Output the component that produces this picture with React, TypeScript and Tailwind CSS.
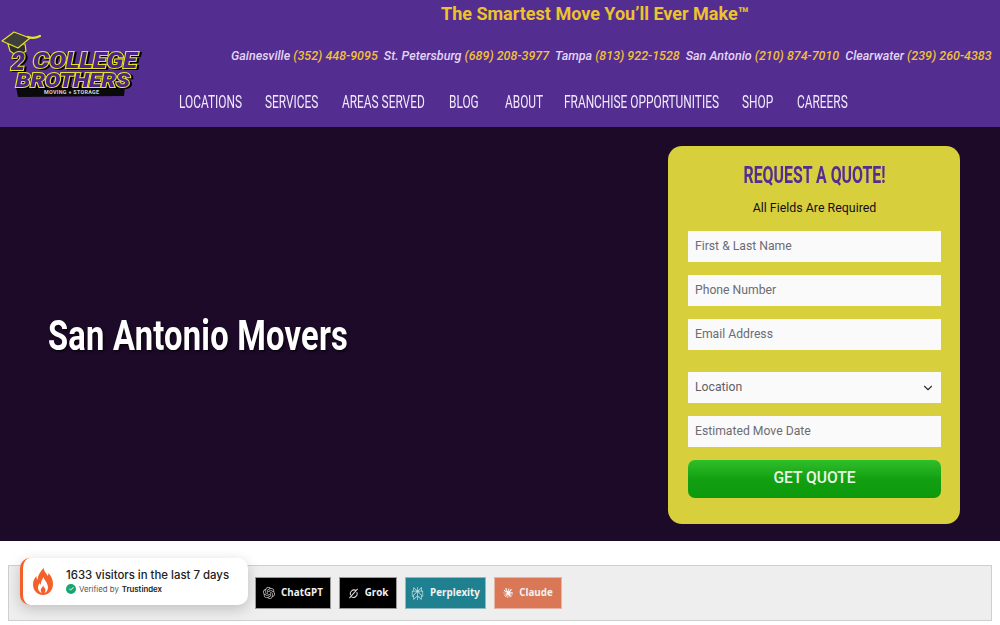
import React from 'react';
import { ChevronDown } from 'lucide-react';
import { SiOpenai, SiPerplexity, SiClaude } from 'react-icons/si';

const offices = [
  { city: 'Gainesville', phone: '(352) 448-9095' },
  { city: 'St. Petersburg', phone: '(689) 208-3977' },
  { city: 'Tampa', phone: '(813) 922-1528' },
  { city: 'San Antonio', phone: '(210) 874-7010' },
  { city: 'Clearwater', phone: '(239) 260-4383' },
];

const navItems = [
  { label: 'LOCATIONS', w: 'w-[62px]' },
  { label: 'SERVICES', w: 'w-[53px]' },
  { label: 'AREAS SERVED', w: 'w-[83px]' },
  { label: 'BLOG', w: 'w-[32px]' },
  { label: 'ABOUT', w: 'w-[35px]' },
  { label: 'FRANCHISE OPPORTUNITIES', w: 'w-[154px]' },
  { label: 'SHOP', w: 'w-[31px]' },
  { label: 'CAREERS', w: 'w-[52px]' },
];

function Logo() {
  return (
    <svg width="146" height="100" viewBox="0 0 146 100" className="shrink-0">
      {/* band under the lettering */}
      <path d="M16 87 L125 87 L124 96 L18 97 Z" fill="#0a0a0a" />
      {/* grad cap */}
      <path d="M8 44 L25 44 L26 51 L18 57 L10 51 Z" fill="#2e2e2a" stroke="#e6e22e" strokeWidth="1.2" />
      <path d="M2 41 L14 32 L30 38 L18 48 Z" fill="#3f3f3a" stroke="#e6e22e" strokeWidth="1.2" strokeLinejoin="round" />
      <path d="M28 37 Q34 39 40 36" fill="none" stroke="#e6e22e" strokeWidth="2.2" strokeLinecap="round" />
      <text x="44" y="94" fill="#d8d8d8" fontSize="5.4" fontWeight="700" fontFamily="Roboto, sans-serif" letterSpacing=".3">MOVING + STORAGE</text>
      <g className="[filter:drop-shadow(2px_1px_0_#000)]" fontFamily="Roboto, sans-serif" fontWeight="900" fontStyle="italic" fill="#4a2488" stroke="#e6e22e" strokeWidth="2" paintOrder="stroke">
        <text x="11" y="70" fontSize="25">2</text>
        <text x="33" y="68" fontSize="22" textLength="104" lengthAdjust="spacingAndGlyphs">COLLEGE</text>
        <text x="16" y="87" fontSize="20" textLength="114" lengthAdjust="spacingAndGlyphs">BROTHERS</text>
      </g>
    </svg>
  );
}

function Flame() {
  return (
    <svg width="20" height="27" viewBox="0 0 20 27" className="shrink-0">
      <path d="M10.500 0c.6 3.600 3 5.600 4.300 8 .5-.8.7-1.800.6-2.900C18 7.700 20 11.500 20 16c0 6.500-4.500 11-10 11S0 22.500 0 16.500c0-3.500 1.500-6.200 3.400-8.500-.1 1.500.3 2.800 1.100 3.700C4.700 7.200 7.500 3.500 10.500 0z" fill="#f4602a" />
      <path d="M10.500 9c.5 3 4.500 5.500 4.500 10.500 0 2.600-1.500 4.600-3.600 5.500 1-1.200 1.400-2.600.9-4-.5-1.200-1.500-1.800-2-3.300-.7 1.500-2.300 2.300-2.500 4-.1 1.300.3 2.400 1 3.300-2.300-.7-3.800-2.800-3.800-5.300 0-2 .9-3.500 1.900-4.700.1.800.4 1.400.9 1.800.2-3.200 1.400-5.400 2.700-7.800z" fill="#fff" />
    </svg>
  );
}

function Field({ label }: { label: string }) {
  return (
    <div className="h-[31px] bg-[#fafafa] flex items-center px-[7px] text-[12.2px] text-[#6c6c74]">
      {label}
    </div>
  );
}

export default function App() {
  return (
    <div className="relative h-[625px] w-[1000px] overflow-hidden bg-white font-['Roboto',sans-serif]">
      {/* Header */}
      <header className="h-[127px] bg-[#542d91] flex">
        <div className="w-[146px] shrink-0">
          <Logo />
        </div>
        <div className="flex-1 flex flex-col min-w-0">
          <div className="h-[27px] pl-[295px] text-[18px] font-bold text-[#ecc32f] leading-[27px] whitespace-nowrap">
            The Smartest Move You’ll Ever Make™
          </div>
          <div className="h-[56px] pl-[85px] flex items-center gap-[6px] text-[12.5px] italic font-medium whitespace-nowrap pt-[2px]">
            {offices.map((o) => (
              <span key={o.city} className="text-[#e3d6f5]">
                {o.city} <span className="text-[#f0c03a]">{o.phone}</span>
              </span>
            ))}
          </div>
          <nav className="pl-[33px] flex gap-[24px] text-[#f1e9fb] text-[18px] leading-[38px] whitespace-nowrap">
            {navItems.map((n) => (
              <span key={n.label} className={`${n.w} flex justify-start`}>
                <span className="inline-block origin-left scale-x-[.66]">{n.label}</span>
              </span>
            ))}
          </nav>
        </div>
      </header>

      {/* Hero */}
      <section className="h-[414px] bg-[#1d0a28] flex justify-between pl-[48px] pr-[40px] pt-[19px]">
        <h1 className="mt-[164px] text-[43px] leading-[50px] font-bold text-white tracking-[.3px] origin-left scale-x-[.76] whitespace-nowrap [text-shadow:2px_2px_3px_rgba(0,0,0,.6)]">
          San Antonio Movers
        </h1>
        <form className="w-[292px] h-[378px] bg-[#d8cf3d] rounded-[14px] pl-[20px] pr-[19px] pt-[15px]">
          <h2 className="text-center text-[#542d91] font-bold text-[23px] leading-[30px] scale-x-[.69] whitespace-nowrap">
            REQUEST A QUOTE!
          </h2>
          <p className="mt-[7px] text-center text-[12.4px] leading-[20px] text-[#14101a]">All Fields Are Required</p>
          <div className="mt-[13px] flex flex-col gap-[13px]">
            <Field label="First & Last Name" />
            <Field label="Phone Number" />
            <Field label="Email Address" />
          </div>
          <div className="mt-[22px] h-[31px] bg-[#fafafa] flex items-center justify-between pl-[7px] pr-[6px] text-[12.2px] text-[#5f5f68]">
            Location
            <ChevronDown size={14} className="text-[#333]" />
          </div>
          <div className="mt-[13px]">
            <Field label="Estimated Move Date" />
          </div>
          <button type="button" className="mt-[13px] w-full h-[38px] rounded-[7px] bg-gradient-to-b from-[#2fbf2a] via-[#12a012] to-[#0c9a0c] text-[#eaf7e6] text-[15.6px] font-medium">
            GET QUOTE
          </button>
        </form>
      </section>

      {/* AI buttons strip */}
      <div className="mx-[8px] mt-[24px] h-[56px] bg-[#eeeeee] border border-[#cfcfcf] flex items-center pl-[246px] gap-[8px] font-['Open_Sans',sans-serif] text-[9.8px] font-bold text-[#f2f2f2]">
        <span className="w-[76px] h-[32px] bg-black border border-[#999] flex items-center justify-center gap-[6px]">
          <SiOpenai size={12} className="text-[#bbb]" />
          ChatGPT
        </span>
        <span className="w-[58px] h-[32px] bg-black border border-[#999] flex items-center justify-center gap-[6px]">
          <svg width="11" height="11" viewBox="0 0 12 12" fill="none" stroke="#ddd" strokeWidth="1.1">
            <path d="M9 3 A4 4 0 0 0 3 8 M3 9 A4 4 0 0 0 9.500 4.500 M1.500 11 L10.500 1" />
          </svg>
          Grok
        </span>
        <span className="w-[81px] h-[32px] bg-[#1f8090] border border-[#8fb9c2] flex items-center justify-center gap-[6px]">
          <SiPerplexity size={13} className="text-[#cfe6ea]" />
          Perplexity
        </span>
        <span className="w-[68px] h-[32px] bg-[#d97757] border border-[#e6b4a2] flex items-center justify-center gap-[6px]">
          <SiClaude size={10} className="text-white" />
          Claude
        </span>
      </div>

      {/* Visitors popup */}
      <div className="absolute left-[20px] top-[558px] w-[228px] h-[47px] bg-white rounded-[10px] border-l-[3px] border-[#f4602a] shadow-[0_4px_14px_rgba(0,0,0,.2)] flex items-center pl-[10px] gap-[13px] font-['Inter',sans-serif]">
        <Flame />
        <div className="pb-[2px]">
          <p className="text-[11.4px] leading-[16px] font-medium text-[#222]">1633 visitors in the last 7 days</p>
          <p className="flex items-center gap-[3px] text-[7.8px] leading-[12px] text-[#555]">
            <span className="w-[10px] h-[10px] rounded-full bg-[#17a673] text-white text-[7px] leading-[10px] text-center">✓</span>
            Verified by <span className="font-semibold text-[#222]">Trustindex</span>
          </p>
        </div>
      </div>
    </div>
  );
}
